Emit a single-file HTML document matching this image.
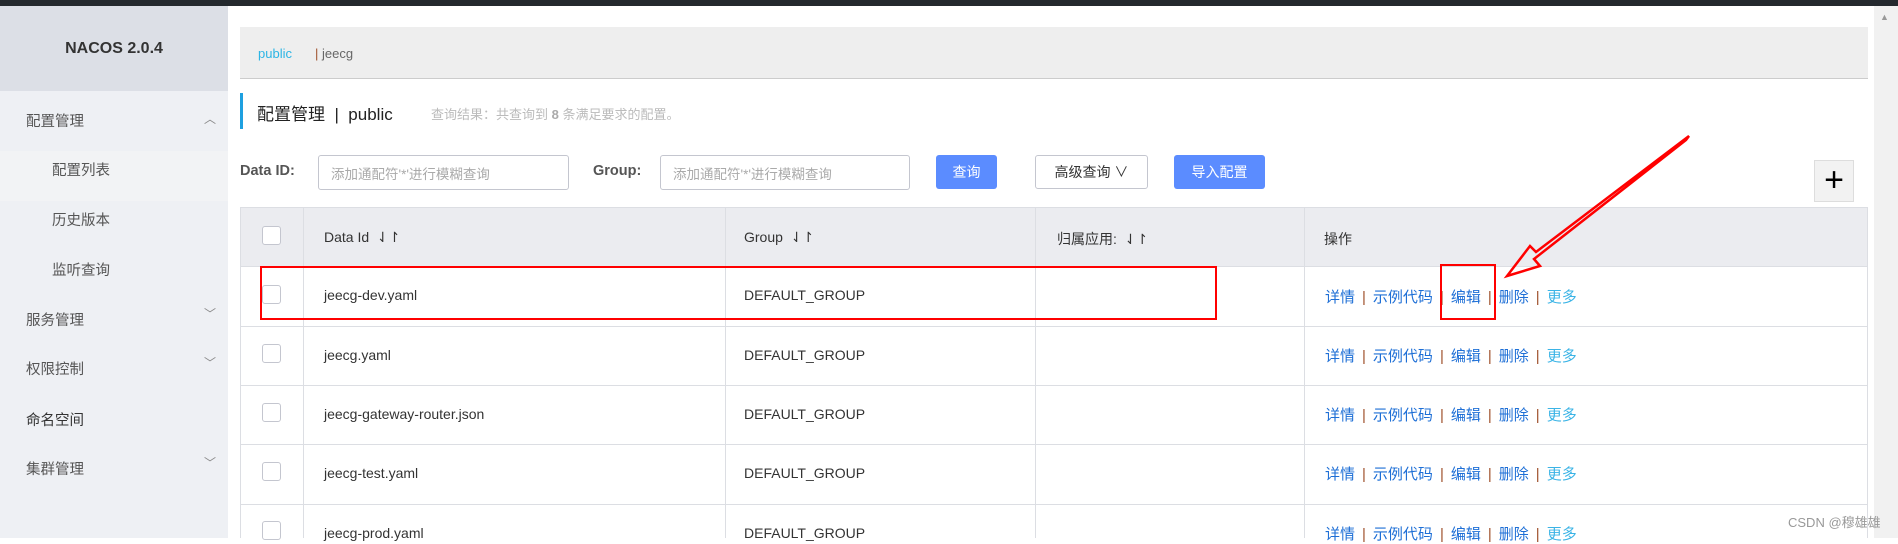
<!DOCTYPE html>
<html><head><meta charset="utf-8"><style>
*{margin:0;padding:0;box-sizing:border-box}
body{width:1898px;height:538px;overflow:hidden;background:#fff;font-family:"Liberation Sans","Noto Sans CJK SC",sans-serif;font-size:14px;color:#333;position:relative}
.a{position:absolute;white-space:nowrap}
.top{left:0;top:0;width:1898px;height:6px;background:#24292e}
.side{left:0;top:6px;width:228px;height:532px;background:#eef0f4}
.sh{left:0;top:6px;width:228px;height:85px;background:#dcdfe6}
.mi{left:26px;color:#555;font-size:14.5px}
.si{left:52px;color:#555;font-size:14.5px}
.car{left:204px;font-size:12px;color:#888}
.inp{height:35px;border:1px solid #c4c6cf;border-radius:3px;color:#aaa;font-size:13.5px;padding:7px 12px}
.btn{height:34px;border-radius:3px;background:#5b8cff;color:#fff;text-align:center;line-height:34px;font-size:14px}
.hl{height:1px;background:#dcdee3}
.vl{width:1px;background:#dcdee3}
.cb{width:19px;height:19px;border:1px solid #c4c6cf;border-radius:3px;background:#fff}
.ops{left:1325px;color:#1e6fd6;font-size:15px}
.ops i{font-style:normal;color:#a0522d;margin:0 7px}
.ops b{font-weight:normal;color:#3bb4e6}
</style></head><body>
<div class="a top"></div>
<div class="a side"></div>
<div class="a sh"></div>
<div class="a" style="left:0;top:40px;width:228px;text-align:center;font-weight:bold;font-size:16px;color:#333">NACOS 2.0.4</div>
<div class="a" style="left:0;top:151px;width:228px;height:50px;background:#f2f3f5"></div>
<div class="a mi" style="top:110px">配置管理</div><div class="a car" style="top:110px">︿</div>
<div class="a si" style="top:159px">配置列表</div>
<div class="a si" style="top:209px">历史版本</div>
<div class="a si" style="top:259px">监听查询</div>
<div class="a mi" style="top:309px">服务管理</div><div class="a car" style="top:305px">﹀</div>
<div class="a mi" style="top:358px">权限控制</div><div class="a car" style="top:354px">﹀</div>
<div class="a mi" style="top:409px;color:#333">命名空间</div>
<div class="a mi" style="top:458px">集群管理</div><div class="a car" style="top:454px">﹀</div>

<div class="a" style="left:240px;top:27px;width:1628px;height:52px;background:#eeeeee;border-bottom:1px solid #ccc"></div>
<div class="a" style="left:258px;top:46px;font-size:13px;color:#2cb5e5">public</div>
<div class="a" style="left:315px;top:46px;font-size:13px;color:#666"><span style="color:#a0522d">|</span> jeecg</div>

<div class="a" style="left:240px;top:93px;width:3px;height:36px;background:#1ea0e0"></div>
<div class="a" style="left:257px;top:100px;font-size:17px;color:#222">配置管理 &nbsp;|&nbsp; public</div>
<div class="a" style="left:431px;top:104px;font-size:13px;color:#bbb">查询结果：共查询到 <b style="color:#aaa">8</b> 条满足要求的配置。</div>

<div class="a" style="left:240px;top:163px;font-weight:bold;color:#555;font-size:14.5px">Data ID:</div>
<div class="a inp" style="left:318px;top:155px;width:251px">添加通配符'*'进行模糊查询</div>
<div class="a" style="left:593px;top:163px;font-weight:bold;color:#555;font-size:14.5px">Group:</div>
<div class="a inp" style="left:660px;top:155px;width:250px">添加通配符'*'进行模糊查询</div>
<div class="a btn" style="left:936px;top:155px;width:61px">查询</div>
<div class="a btn" style="left:1035px;top:155px;width:113px;background:#fff;border:1px solid #c4c6cf;color:#333;line-height:32px">高级查询 ∨</div>
<div class="a btn" style="left:1174px;top:155px;width:91px">导入配置</div>
<div class="a" style="left:1814px;top:160px;width:40px;height:42px;background:#f2f2f2;border:1px solid #ddd;font-size:34px;line-height:38px;text-align:center;color:#000">+</div>

<div class="a" style="left:240px;top:207px;width:1628px;height:59px;background:#ebecf0"></div>
<div class="a hl" style="left:240px;top:207px;width:1628px"></div>
<div class="a hl" style="left:240px;top:266px;width:1628px"></div>
<div class="a hl" style="left:240px;top:326px;width:1628px"></div>
<div class="a hl" style="left:240px;top:385px;width:1628px"></div>
<div class="a hl" style="left:240px;top:444px;width:1628px"></div>
<div class="a hl" style="left:240px;top:504px;width:1628px"></div>
<div class="a vl" style="left:240px;top:207px;height:331px"></div>
<div class="a vl" style="left:303px;top:207px;height:331px"></div>
<div class="a vl" style="left:725px;top:207px;height:331px"></div>
<div class="a vl" style="left:1035px;top:207px;height:331px"></div>
<div class="a vl" style="left:1304px;top:207px;height:331px"></div>
<div class="a vl" style="left:1867px;top:207px;height:331px"></div>

<div class="a cb" style="left:262px;top:226px"></div>
<div class="a" style="left:324px;top:229px">Data Id &nbsp;⇃↾</div>
<div class="a" style="left:744px;top:229px">Group &nbsp;⇃↾</div>
<div class="a" style="left:1057px;top:229px">归属应用: &nbsp;⇃↾</div>
<div class="a" style="left:1324px;top:229px">操作</div>

<div class="a cb" style="left:262px;top:285px"></div>
<div class="a" style="left:324px;top:287px">jeecg-dev.yaml</div>
<div class="a" style="left:744px;top:287px">DEFAULT_GROUP</div>
<div class="a ops" style="top:286px">详情<i>|</i>示例代码<i>|</i>编辑<i>|</i>删除<i>|</i><b>更多</b></div>

<div class="a cb" style="left:262px;top:344px"></div>
<div class="a" style="left:324px;top:347px">jeecg.yaml</div>
<div class="a" style="left:744px;top:347px">DEFAULT_GROUP</div>
<div class="a ops" style="top:345px">详情<i>|</i>示例代码<i>|</i>编辑<i>|</i>删除<i>|</i><b>更多</b></div>

<div class="a cb" style="left:262px;top:403px"></div>
<div class="a" style="left:324px;top:406px">jeecg-gateway-router.json</div>
<div class="a" style="left:744px;top:406px">DEFAULT_GROUP</div>
<div class="a ops" style="top:404px">详情<i>|</i>示例代码<i>|</i>编辑<i>|</i>删除<i>|</i><b>更多</b></div>

<div class="a cb" style="left:262px;top:462px"></div>
<div class="a" style="left:324px;top:465px">jeecg-test.yaml</div>
<div class="a" style="left:744px;top:465px">DEFAULT_GROUP</div>
<div class="a ops" style="top:463px">详情<i>|</i>示例代码<i>|</i>编辑<i>|</i>删除<i>|</i><b>更多</b></div>

<div class="a cb" style="left:262px;top:521px"></div>
<div class="a" style="left:324px;top:525px">jeecg-prod.yaml</div>
<div class="a" style="left:744px;top:525px">DEFAULT_GROUP</div>
<div class="a ops" style="top:523px">详情<i>|</i>示例代码<i>|</i>编辑<i>|</i>删除<i>|</i><b>更多</b></div>

<div class="a" style="left:260px;top:266px;width:957px;height:54px;border:2px solid #f00"></div>
<div class="a" style="left:1440px;top:264px;width:56px;height:56px;border:2px solid #f00"></div>
<svg class="a" style="left:0;top:0" width="1898" height="538"><polygon points="1689,136 1536,252 1530,246 1507,276 1540,266 1534,259 1686,140" fill="none" stroke="#f00" stroke-width="2.5" stroke-linejoin="miter"/></svg>

<div class="a" style="left:1874px;top:6px;width:24px;height:532px;background:#f1f1f1"></div>
<div class="a" style="left:1880px;top:12px;font-size:9px;color:#999">▲</div>
<div class="a" style="left:1788px;top:512px;font-size:13px;color:#999">CSDN @穆雄雄</div>
</body></html>
